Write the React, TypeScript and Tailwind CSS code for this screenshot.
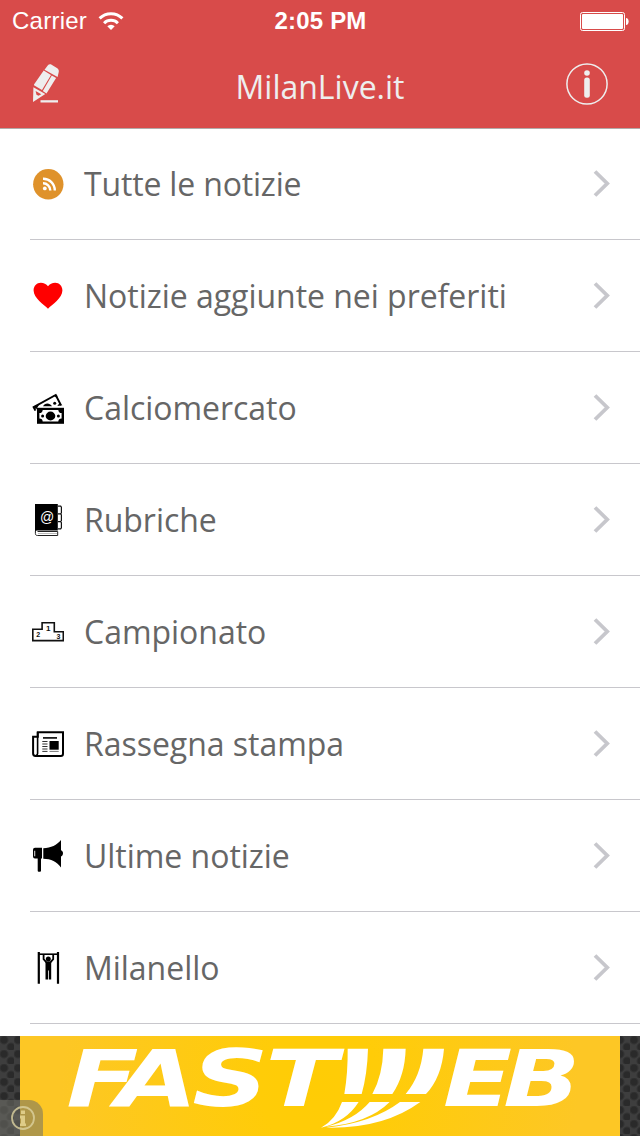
import React from 'react';

const RssIcon: React.FC = () => (
  <svg viewBox="0 0 32 32" className="w-8 h-8">
    <circle cx="16.3" cy="16.3" r="15.2" fill="#df922b" />
    <circle cx="12.8" cy="20.4" r="1.9" fill="#fff" />
    <g fill="none" stroke="#fff" strokeWidth="2.4">
      <path d="M11 15.2a7.2 7.2 0 0 1 7.3 7.2" />
      <path d="M11 10.7a11.5 11.5 0 0 1 11.8 11.7" />
    </g>
  </svg>
);

const HeartIcon: React.FC = () => (
  <svg viewBox="0 0 32 32" className="w-8 h-8">
    <path
      d="M16 28.8C12 24.4 1.6 18.3 1.6 10.5 1.6 6.1 4.7 2.8 8.8 2.8c3 0 5.6 1.2 7.2 3.4 1.6-2.2 4.2-3.4 7.2-3.4 4.1 0 7.2 3.3 7.2 7.7C30.4 18.3 20 24.4 16 28.8z"
      fill="#f00"
    />
  </svg>
);

const MoneyIcon: React.FC = () => (
  <svg viewBox="0 0 32 32" className="w-8 h-8">
    <path d="M3.4 18.6 1.6 15.2 23.7 3 29 13.2" fill="none" stroke="#000" strokeWidth="1.9" />
    <path d="M1.3 14.2 7.2 12.4 4.2 17.6zM21.5 3.5 25 2.8 25.8 6.7zM27.2 11.5 30.5 13.2 25.3 14z" />
    <path d="M11 14.3c1.2-3 6.2-4.7 9 0z" />
    <circle cx="22.7" cy="11.3" r="1.5" />
    <path d="M5 15.8h27V31.8H5z" />
    <path d="M10.7 18h15.6a3.3 3.3 0 0 0 3.3 3.1v5.4a3.3 3.3 0 0 0-3.3 3.1H10.7a3.3 3.3 0 0 0-3.3-3.1v-5.4a3.3 3.3 0 0 0 3.3-3.1z" fill="#fff" />
    <ellipse cx="18.5" cy="24" rx="4.8" ry="4.4" />
    <circle cx="10.6" cy="24" r="1.5" />
    <circle cx="26.4" cy="24" r="1.5" />
  </svg>
);

const BookIcon: React.FC = () => (
  <svg viewBox="0 0 32 32" className="w-8 h-8">
    <path d="M3 0h22.8v26.6H5.3A2.4 2.4 0 0 0 3 28z" />
    <path d="M3.4 27v2.5c0 1.4.8 2 2 2h20.3v-4H5.5" fill="#fff" stroke="#222" strokeWidth="1" />
    <path d="M6 29.5h19" stroke="#bbb" strokeWidth="1" />
    <path d="M26 2.2h2.7l.7 1v5.7l-.7 1H26M28.7 9.9l.7 1v5.7l-.7 1H26M28.7 17.6l.7 1v5.2l-.7 1H26" fill="none" stroke="#111" strokeWidth="1.2" />
    <text x="15" y="17.8" fill="#fff" fontSize="14" textAnchor="middle" fontFamily="Liberation Sans, sans-serif">@</text>
  </svg>
);

const PodiumIcon: React.FC = () => (
  <svg viewBox="0 0 32 32" className="w-8 h-8">
    <path d="M.8 13.3h9.3V6.8h12.2v9h9v8.8H.8z" fill="#fff" stroke="#111" strokeWidth="1.6" />
    <g fill="#111" fontWeight="bold" fontFamily="Liberation Sans, sans-serif" textAnchor="middle">
      <text x="16.2" y="14.6" fontSize="8">1</text>
      <text x="6.1" y="20.7" fontSize="7">2</text>
      <text x="26.4" y="22.8" fontSize="7">3</text>
    </g>
  </svg>
);

const NewspaperIcon: React.FC = () => (
  <svg viewBox="0 0 32 32" className="w-8 h-8">
    <path d="M5.8 4.2h25.2v21.5a2.2 2.2 0 0 1-2.2 2.2H3.5A2.5 2.5 0 0 1 1.1 25.4V8.7h4.7z" fill="#fff" stroke="#000" strokeWidth="2" />
    <path d="M5.6 4v21.5a2 2 0 0 1-1.8 2" fill="none" stroke="#000" strokeWidth="1.6" />
    <path d="M11 9.9h14" stroke="#111" strokeWidth="1.7" />
    <path d="M10.3 13.5h5.2M10.3 16h5.2M10.3 18.5h5.2M10.3 21h5.2M10.3 23.4h5.2" stroke="#333" strokeWidth="1" />
    <path d="M17.5 13h9.2v8.7h-9.2z" />
    <path d="M17.5 23.4h9.2" stroke="#777" strokeWidth="1" />
  </svg>
);

const MegaphoneIcon: React.FC = () => (
  <svg viewBox="0 0 32 32" className="w-8 h-8">
    <path d="M10 7.8v10.6H9v12.3a1 1 0 0 1-1 1H6.7a1 1 0 0 1-1-1V18.4H3A2 2 0 0 1 1 16.4V9.8a2 2 0 0 1 2-2z" />
    <path d="M2.3 10.7h.9v5.5h-.9z" fill="#fff" />
    <path d="M11.3 8.3C19 8 25 5 29 0v10.2c2.7.9 2.7 5.3 0 6.2v11C25 22 19 18.7 11.3 18.7z" />
  </svg>
);

const GymIcon: React.FC = () => (
  <svg viewBox="0 0 32 32" className="w-8 h-8">
    <path d="M6.8 0v31.7M26 0v31.7" stroke="#000" strokeWidth="2.2" />
    <path d="M6 2.2h20" stroke="#000" strokeWidth="1.6" />
    <path d="M11.6 2v5.2l3 3.3h3.6l3-3.3V2" fill="none" stroke="#000" strokeWidth="1.8" />
    <circle cx="16.3" cy="6.9" r="2.5" />
    <path d="M13.5 9.8h5.7v17.6h-2.4V18.5h-.8v8.9h-2.5z" />
  </svg>
);

const menuItems = [
  { label: 'Tutte le notizie', Icon: RssIcon },
  { label: 'Notizie aggiunte nei preferiti', Icon: HeartIcon },
  { label: 'Calciomercato', Icon: MoneyIcon },
  { label: 'Rubriche', Icon: BookIcon },
  { label: 'Campionato', Icon: PodiumIcon },
  { label: 'Rassegna stampa', Icon: NewspaperIcon },
  { label: 'Ultime notizie', Icon: MegaphoneIcon },
  { label: 'Milanello', Icon: GymIcon },
];

const StatusBar: React.FC = () => (
  <div className="grid grid-cols-3 items-center h-10 pl-3 pr-[11px] text-white font-['Liberation_Sans',sans-serif]">
    <div className="flex items-center">
      <span className="text-[24px] leading-10 w-[86px] pt-px tracking-[0.25px]">Carrier</span>
      <svg viewBox="0 0 26 20" className="w-[26px] h-5">
        <path d="M13 19 9.3 15.3a5.2 5.2 0 0 1 7.4 0z" fill="#fff" />
        <g fill="none" stroke="#fff" strokeWidth="3">
          <path d="M6.1 12.2a9.8 9.8 0 0 1 13.8 0" />
          <path d="M1.6 7.4a16.1 16.1 0 0 1 22.8 0" />
        </g>
      </svg>
    </div>
    <span className="text-[24px] leading-10 pt-px font-bold text-center tracking-[0.2px]">2:05 PM</span>
    <svg viewBox="0 0 49 20" className="w-[49px] h-5 justify-self-end">
      <rect x=".5" y="1.5" width="44" height="18" rx="2" fill="none" stroke="#fff" />
      <rect x="2" y="3" width="41" height="15" rx="1" fill="#fff" />
      <path d="M46 7c3.5 0 3.5 7 0 7z" fill="#fff" />
    </svg>
  </div>
);

const NavBar: React.FC = () => (
  <div className="flex items-center justify-between h-[88px] px-8 text-[#eee]">
    <button className="w-[42px]">
      <svg viewBox="0 0 28 40" className="w-7 h-10" fill="#eee">
        <path d="m12.5 5.7 3.2-4.1c1-1.3 2.5-1.6 3.9-.8l5.3 3.1c1.5.9 2.2 2.3 1.9 3.9l-1.2 5.2z" />
        <path d="M11.7 6.6 19 10.9 10 26 2 21.3V20.5zM19.8 11.4l4.3 2.5-9.6 15.6-3.7-2.6z" />
        <path fillRule="evenodd" d="M1.4 23.3 13.3 30 1 38zM3.6 27 4.5 30.7 6.5 31.7 9.3 30.2z" />
        <path d="M8.5 36.2H26V38.5H8.5z" />
      </svg>
    </button>
    <h1 className="text-[32px] leading-[88px] pt-[5px] font-normal">MilanLive.it</h1>
    <button>
      <svg viewBox="0 0 42 42" className="w-[42px] h-[42px]">
        <circle cx="21" cy="21" r="20.1" fill="none" stroke="#eee" strokeWidth="1.5" />
        <circle cx="21" cy="10" r="2.8" fill="#eee" />
        <rect x="18.2" y="14.5" width="5.6" height="20.3" rx="2.5" fill="#eee" />
      </svg>
    </button>
  </div>
);

const AdBanner: React.FC = () => (
  <div className="relative h-[100px] px-5 bg-[#3e3e3e] bg-[radial-gradient(circle_at_4px_4px,#2a2a2a_3px,transparent_5px),radial-gradient(circle_at_11px_11px,#2a2a2a_3px,transparent_5px)] bg-size-[14px_14px]">
    <div className="h-full bg-[radial-gradient(circle_at_center,#ffcc05_0%,#ffcc08_20%,#fdc725_85%)]">
      <svg viewBox="0 0 600 100" className="w-full h-full overflow-visible" fill="#fff">
        <g fontFamily="DejaVu Sans, sans-serif" fontWeight="bold" fontStyle="italic" fontSize="79">
          <text transform="translate(0 70) scale(1.34 1)" x="34.5 71.5 128.5 183">FAST</text>
          <text transform="translate(0 70) scale(1.28 1)" x="330.5 377.5">EB</text>
        </g>
        {/* swoosh that stands in for the middle letter */}
        <g transform="translate(300 -21) scale(.33333)">
          <path d="M83 101h61q-2 75-19 136H73q11-65 10-136z" />
          <path d="M190 101h67q-2 80-40 136h-60q31-56 33-136z" />
          <path d="M310 101h62q-7 86-54 136h-61q46-55 53-136z" />
          <path d="M66 261h50q-38 60-113 77 44-23 63-77z" />
          <path d="M149 261h60Q145 325 18 335q85-20 131-74z" />
          <path d="M240 261h61Q190 342 18 338q138-14 222-77z" />
        </g>
      </svg>
    </div>
    <div className="absolute left-0 bottom-0 w-[43px] h-9 rounded-tr-[14px] bg-[#706f68]/55">
      <svg viewBox="0 0 43 36" className="w-full h-full">
        <circle cx="23" cy="18" r="11" fill="none" stroke="#dcd2a0" strokeOpacity=".8" strokeWidth="1.8" />
        <path d="M21 10.5h4v3.5h-4zM20 15.5H25v8h1V26h-6v-2.5H21v-5h-1z" fill="#e6d592" fillOpacity=".85" />
      </svg>
    </div>
  </div>
);

const App: React.FC = () => {
  return (
    <div className="flex flex-col w-[640px] h-[1136px] overflow-hidden bg-white font-['Open_Sans',sans-serif]">
      <header className="h-[129px] shrink-0 bg-[#d84b4a] border-b border-[#b2aaa9]">
        <StatusBar />
        <NavBar />
      </header>

      <ul className="flex-1 -mt-px">
        {menuItems.map(({ label, Icon }) => (
          <li key={label} className="flex items-center h-28 ml-[30px] pl-0.5 pr-[29px] border-b border-[#c8c7cc] tracking-[-0.03px] first:tracking-[-0.17px]">
            <Icon />
            <span className="flex-1 ml-5 text-[32px] text-[#666]">{label}</span>
            <svg viewBox="0 0 18 28" className="w-[18px] h-7" fill="none" stroke="#c7c7cc" strokeWidth="3.8">
              <path d="M2 1.5 14.2 13.5 2 25.5" />
            </svg>
          </li>
        ))}
      </ul>

      <AdBanner />
    </div>
  );
};

export default App;
